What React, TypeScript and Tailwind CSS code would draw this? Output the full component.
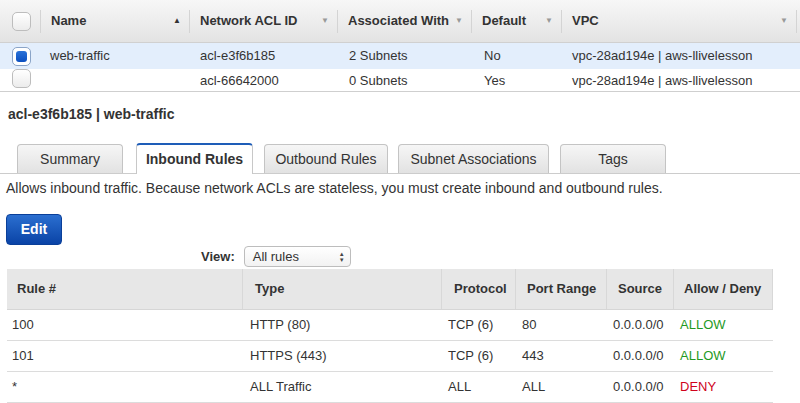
import React from "react";

const topCols = "grid-cols-[41px_149px_148px_134px_90px_235px_3px]";
const ruleCols = "grid-cols-[236px_199px_74px_91px_67px_99px]";

function Caret({ dark }: { dark?: boolean }) {
  return (
    <span className={`text-[8px] leading-none ${dark ? "text-[#333]" : "text-[#999]"}`}>
      {dark ? "▲" : "▼"}
    </span>
  );
}

function HeadCell({ label, dark, sort = true }: { label: string; dark?: boolean; sort?: boolean }) {
  return (
    <div className="flex items-center justify-between pl-[10px] pr-[8px] h-full border-r border-[#d4d4d4] my-auto">
      <span className="font-bold">{label}</span>
      {sort && <Caret dark={dark} />}
    </div>
  );
}

function Check({ on }: { on?: boolean }) {
  return (
    <div
      className={`w-[19px] h-[19px] rounded-[5px] border ${
        on
          ? "border-[#8aa4c8] bg-white p-[3px]"
          : "border-[#bdbdbd] bg-gradient-to-b from-white to-[#ececec]"
      }`}
    >
      {on && <div className="w-full h-full rounded-[3px] bg-gradient-to-b from-[#2a72d8] to-[#0b4fc0]" />}
    </div>
  );
}

function Tab({ label, active, w, ml }: { label: string; active?: boolean; w: string; ml: string }) {
  return (
    <div
      className={`${w} ${ml} flex items-center justify-center rounded-t-[4px] border border-b-0 text-[14px] ${
        active
          ? "h-[31px] bg-white border-[#c8c8c8] border-t-2 border-t-[#1e5db8] font-bold text-[#333] mb-[-1px]"
          : "h-[29px] bg-gradient-to-b from-[#f6f6f6] to-[#e2e2e2] border-[#c4c4c4] text-[#333]"
      }`}
    >
      {label}
    </div>
  );
}

const rules = [
  { n: "100", type: "HTTP (80)", proto: "TCP (6)", port: "80", src: "0.0.0.0/0", act: "ALLOW" },
  { n: "101", type: "HTTPS (443)", proto: "TCP (6)", port: "443", src: "0.0.0.0/0", act: "ALLOW" },
  { n: "*", type: "ALL Traffic", proto: "ALL", port: "ALL", src: "0.0.0.0/0", act: "DENY" },
];

export default function App() {
  return (
    <div className="w-[800px] h-[403px] overflow-hidden bg-white text-[13px] text-[#333] font-['Liberation_Sans',Arial,sans-serif]">
      {/* top list */}
      <div className={`grid ${topCols} h-[43px] bg-gradient-to-b from-[#f7f7f7] to-[#e3e3e3] border-b border-[#d0d0d0] items-center`}>
        <div className="h-[23px] flex items-center pl-[12px] border-r border-[#d4d4d4]">
          <Check />
        </div>
        <div className="h-[23px]"><HeadCell label="Name" dark /></div>
        <div className="h-[23px]"><HeadCell label="Network ACL ID" /></div>
        <div className="h-[23px]"><HeadCell label="Associated With" /></div>
        <div className="h-[23px]"><HeadCell label="Default" /></div>
        <div className="h-[23px]"><HeadCell label="VPC" /></div>
        <div />
      </div>
      <div className={`grid ${topCols} h-[27px] bg-[#e3eefc] border-b border-white items-center`}>
        <div className="pl-[12px]"><Check on /></div>
        <div className="pl-[9px]">web-traffic</div>
        <div className="pl-[10px]">acl-e3f6b185</div>
        <div className="pl-[11px]">2 Subnets</div>
        <div className="pl-[12px]">No</div>
        <div className="pl-[10px]">vpc-28ad194e | aws-llivelesson</div>
        <div />
      </div>
      <div className={`grid ${topCols} h-[22px] bg-white border-b border-[#cfcfcf] items-center`}>
        <div className="pl-[12px] self-start -mt-[1px]"><Check /></div>
        <div className="pl-[9px]"></div>
        <div className="pl-[10px]">acl-66642000</div>
        <div className="pl-[11px]">0 Subnets</div>
        <div className="pl-[12px]">Yes</div>
        <div className="pl-[10px]">vpc-28ad194e | aws-llivelesson</div>
        <div />
      </div>

      {/* details */}
      <div className="pl-[8px] pt-[14px] font-bold text-[14px] leading-[16px]">acl-e3f6b185 | web-traffic</div>

      <div className="mt-[21px] flex items-end h-[31px] border-b border-[#cccccc]">
        <Tab label="Summary" w="w-[106px]" ml="ml-[17px]" />
        <Tab label="Inbound Rules" active w="w-[117px]" ml="ml-[13px]" />
        <Tab label="Outbound Rules" w="w-[124px]" ml="ml-[11px]" />
        <Tab label="Subnet Associations" w="w-[151px]" ml="ml-[10px]" />
        <Tab label="Tags" w="w-[106px]" ml="ml-[11px]" />
      </div>

      <div className="pl-[6px] pt-[6px] leading-[16px] text-[14px]">
        Allows inbound traffic. Because network ACLs are stateless, you must create inbound and outbound rules.
      </div>

      <div className="pl-[6px] pt-[18px]">
        <button className="w-[56px] h-[31px] rounded-[4px] bg-gradient-to-b from-[#2b6fd0] to-[#0a43a6] border border-[#0a3f99] text-white font-bold text-[14px]">
          Edit
        </button>
      </div>

      <div className="flex items-center h-[21px] mt-[1px]">
        <span className="ml-[201px] font-bold">View:</span>
        <div className="ml-[9px] w-[107px] h-[21px] rounded-[4px] border border-[#bdbdbd] bg-gradient-to-b from-white to-[#f2f2f2] flex items-center justify-between pl-[8px] pr-[5px]">
          <span>All rules</span>
          <span className="flex flex-col text-[6px] leading-[6px] text-[#444]">
            <span>▲</span>
            <span>▼</span>
          </span>
        </div>
      </div>

      {/* rules table */}
      <div className="ml-[7px] mt-[2px] w-[766px]">
        <div className={`grid ${ruleCols} h-[41px] bg-[#e7e7e7] items-center font-bold border-b border-[#d6d6d6]`}>
          <div className="pl-[10px] h-full flex items-center border-r border-[#d8d8d8]">Rule #</div>
          <div className="pl-[12px] h-full flex items-center border-r border-[#d8d8d8]">Type</div>
          <div className="pl-[12px] h-full flex items-center border-r border-[#d8d8d8]">Protocol</div>
          <div className="pl-[11px] h-full flex items-center border-r border-[#d8d8d8]">Port Range</div>
          <div className="pl-[11px] h-full flex items-center border-r border-[#d8d8d8]">Source</div>
          <div className="pl-[10px] h-full flex items-center border-r border-[#d8d8d8]">Allow / Deny</div>
        </div>
        {rules.map((r) => (
          <div key={r.n} className={`grid ${ruleCols} h-[31px] items-center border-b border-[#dcdcdc]`}>
            <div className="pl-[5px]">{r.n}</div>
            <div className="pl-[7px]">{r.type}</div>
            <div className="pl-[6px]">{r.proto}</div>
            <div className="pl-[6px]">{r.port}</div>
            <div className="pl-[6px]">{r.src}</div>
            <div className={`pl-[6px] ${r.act === "DENY" ? "text-[#d0021b]" : "text-[#1f9a1f]"}`}>{r.act}</div>
          </div>
        ))}
      </div>
    </div>
  );
}
